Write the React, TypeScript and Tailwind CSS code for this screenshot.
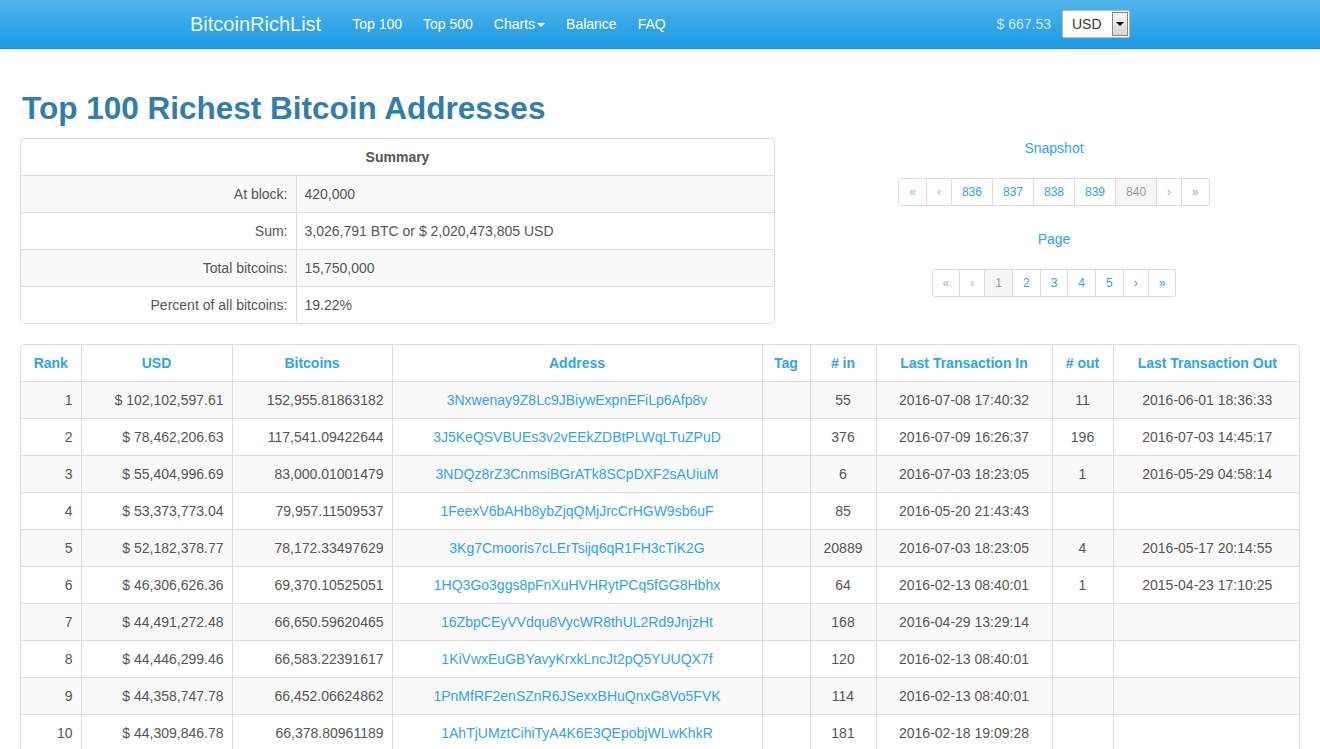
import React from "react";

const rows: string[][] = [
  ["1", "$ 102,102,597.61", "152,955.81863182", "3Nxwenay9Z8Lc9JBiywExpnEFiLp6Afp8v", "", "55", "2016-07-08 17:40:32", "11", "2016-06-01 18:36:33"],
  ["2", "$ 78,462,206.63", "117,541.09422644", "3J5KeQSVBUEs3v2vEEkZDBtPLWqLTuZPuD", "", "376", "2016-07-09 16:26:37", "196", "2016-07-03 14:45:17"],
  ["3", "$ 55,404,996.69", "83,000.01001479", "3NDQz8rZ3CnmsiBGrATk8SCpDXF2sAUiuM", "", "6", "2016-07-03 18:23:05", "1", "2016-05-29 04:58:14"],
  ["4", "$ 53,373,773.04", "79,957.11509537", "1FeexV6bAHb8ybZjqQMjJrcCrHGW9sb6uF", "", "85", "2016-05-20 21:43:43", "", ""],
  ["5", "$ 52,182,378.77", "78,172.33497629", "3Kg7Cmooris7cLErTsijq6qR1FH3cTiK2G", "", "20889", "2016-07-03 18:23:05", "4", "2016-05-17 20:14:55"],
  ["6", "$ 46,306,626.36", "69,370.10525051", "1HQ3Go3ggs8pFnXuHVHRytPCq5fGG8Hbhx", "", "64", "2016-02-13 08:40:01", "1", "2015-04-23 17:10:25"],
  ["7", "$ 44,491,272.48", "66,650.59620465", "16ZbpCEyVVdqu8VycWR8thUL2Rd9JnjzHt", "", "168", "2016-04-29 13:29:14", "", ""],
  ["8", "$ 44,446,299.46", "66,583.22391617", "1KiVwxEuGBYavyKrxkLncJt2pQ5YUUQX7f", "", "120", "2016-02-13 08:40:01", "", ""],
  ["9", "$ 44,358,747.78", "66,452.06624862", "1PnMfRF2enSZnR6JSexxBHuQnxG8Vo5FVK", "", "114", "2016-02-13 08:40:01", "", ""],
  ["10", "$ 44,309,846.78", "66,378.80961189", "1AhTjUMztCihiTyA4K6E3QEpobjWLwKhkR", "", "181", "2016-02-18 19:09:28", "", ""],
];

const headers = ["Rank", "USD", "Bitcoins", "Address", "Tag", "# in", "Last Transaction In", "# out", "Last Transaction Out"];
const widths = ["w-[60px]", "w-[151px]", "w-[160px]", "w-[370px]", "w-[48px]", "w-[66px]", "w-[176px]", "w-[61px]", "w-[188px]"];
const aligns = ["text-right", "text-right", "text-right", "text-center", "text-center", "text-center", "text-center", "text-center", "text-center"];

type PItem = { label: string; state: "link" | "light" | "active" | "disabled" };

function Pagination({ items }: { items: PItem[] }) {
  return (
    <div className="flex text-[12px] leading-[16px]">
      {items.map((it, i) => {
        const first = i === 0;
        const last = i === items.length - 1;
        let cls = "px-[10px] py-[5px] border-y border-r border-[#ddd] ";
        if (first) cls += "border-l rounded-l-[3px] ";
        if (last) cls += "rounded-r-[3px] ";
        if (it.state === "active") cls += "bg-[#f5f5f5] text-[#999] ";
        else if (it.state === "disabled") cls += "bg-white text-[#aaa] ";
        else if (it.state === "light") cls += "bg-white text-[#7cc3ee] ";
        else cls += "bg-white text-[#2fa4e7] ";
        return (
          <span key={i} className={cls}>
            {it.label}
          </span>
        );
      })}
    </div>
  );
}

export default function App() {
  return (
    <div className="min-h-[749px] bg-white text-[#555] text-[14px] leading-[20px]" style={{ fontFamily: '"Liberation Sans", Arial, sans-serif' }}>
      {/* navbar */}
      <div className="h-[49px] border-b border-[#178acc] bg-[linear-gradient(#54b4eb,#2fa4e7_60%,#1d9ce5)] shadow-[0_1px_2px_rgba(0,0,0,0.1)]">
        <div className="w-[940px] mx-auto h-full flex items-center">
          <span className="text-[20px] leading-[24px] text-[#f2f8fd] mr-[21px]">BitcoinRichList</span>
          <nav className="flex text-white">
            <span className="px-[10px] mr-[1px]">Top 100</span>
            <span className="px-[10px] mr-[1px]">Top 500</span>
            <span className="px-[10px] mr-[1px] flex items-center">
              Charts
              <span className="ml-[2px] mt-[1px] inline-block w-0 h-0 border-x-[4px] border-t-[4px] border-x-transparent border-t-white"></span>
            </span>
            <span className="px-[10px] mr-[1px]">Balance</span>
            <span className="px-[10px]">FAQ</span>
          </nav>
          <div className="ml-auto flex items-center">
            <span className="text-[#cde9fa] mr-[11px]">$ 667.53</span>
            <div className="w-[68px] h-[28px] bg-white border border-[#bbb] rounded-[2px] flex items-center justify-between pl-[9px] pr-[1px]">
              <span className="text-[#333]">USD</span>
              <div className="w-[16px] h-[24px] border border-[#888] bg-[linear-gradient(#f4f4f4,#d8d8d8)] flex items-center justify-center">
                <span className="inline-block w-0 h-0 border-x-[4px] border-t-[4px] border-x-transparent border-t-black"></span>
              </div>
            </div>
          </div>
        </div>
      </div>

      {/* content */}
      <div className="px-[20px] pt-[42px]">
        <h1 className="text-[31.5px] leading-[34px] font-bold text-[#317eac] mb-[13px] ml-[2px]">Top 100 Richest Bitcoin Addresses</h1>

        <div className="flex">
          <div className="w-[755px] border border-[#ddd] rounded-[4px] overflow-hidden">
            <table className="w-full border-collapse table-fixed">
              <colgroup>
                <col className="w-[275px]" />
                <col />
              </colgroup>
              <thead>
                <tr>
                  <th colSpan={2} className="p-[8px] text-center font-bold text-[#555]">Summary</th>
                </tr>
              </thead>
              <tbody>
                {[
                  ["At block:", "420,000"],
                  ["Sum:", "3,026,791 BTC or $ 2,020,473,805 USD"],
                  ["Total bitcoins:", "15,750,000"],
                  ["Percent of all bitcoins:", "19.22%"],
                ].map((r, i) => (
                  <tr key={i} className={i % 2 === 0 ? "bg-[#f9f9f9]" : "bg-white"}>
                    <td className="p-[8px] text-right border-t border-[#ddd]">{r[0]}</td>
                    <td className="p-[8px] border-t border-l border-[#ddd]">{r[1]}</td>
                  </tr>
                ))}
              </tbody>
            </table>
          </div>

          <div className="flex-1 ml-[33px] flex flex-col items-center">
            <span className="text-[#2fa4e7]">Snapshot</span>
            <div className="mt-[20px]">
              <Pagination
                items={[
                  { label: "«", state: "light" },
                  { label: "‹", state: "light" },
                  { label: "836", state: "link" },
                  { label: "837", state: "link" },
                  { label: "838", state: "link" },
                  { label: "839", state: "link" },
                  { label: "840", state: "active" },
                  { label: "›", state: "disabled" },
                  { label: "»", state: "disabled" },
                ]}
              />
            </div>
            <span className="text-[#2fa4e7] mt-[23px]">Page</span>
            <div className="mt-[20px]">
              <Pagination
                items={[
                  { label: "«", state: "disabled" },
                  { label: "‹", state: "disabled" },
                  { label: "1", state: "active" },
                  { label: "2", state: "link" },
                  { label: "3", state: "link" },
                  { label: "4", state: "link" },
                  { label: "5", state: "link" },
                  { label: "›", state: "link" },
                  { label: "»", state: "link" },
                ]}
              />
            </div>
          </div>
        </div>

        <div className="mt-[20px] border border-[#ddd] rounded-[4px] overflow-hidden">
          <table className="w-full border-collapse table-fixed">
            <thead>
              <tr>
                {headers.map((h, i) => (
                  <th key={i} className={`${widths[i]} p-[8px] text-center font-bold text-[#2fa4e7] ${i > 0 ? "border-l border-[#ddd]" : ""}`}>
                    {h}
                  </th>
                ))}
              </tr>
            </thead>
            <tbody>
              {rows.map((r, ri) => (
                <tr key={ri} className={ri % 2 === 0 ? "bg-[#f9f9f9]" : "bg-white"}>
                  {r.map((c, ci) => (
                    <td
                      key={ci}
                      className={`p-[8px] border-t border-[#ddd] whitespace-nowrap ${aligns[ci]} ${ci > 0 ? "border-l" : ""} ${ci === 3 ? "text-[#2fa4e7]" : ""}`}
                    >
                      {c}
                    </td>
                  ))}
                </tr>
              ))}
            </tbody>
          </table>
        </div>
      </div>
    </div>
  );
}
